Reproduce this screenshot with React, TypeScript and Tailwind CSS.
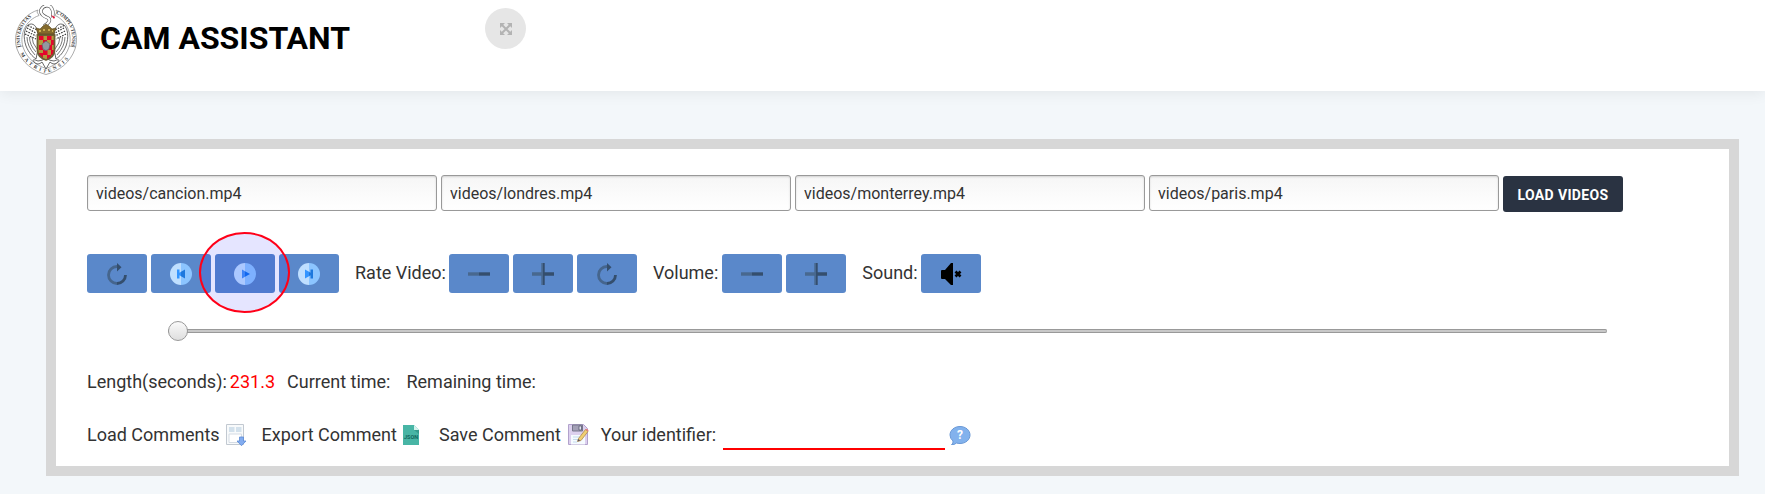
import { useState, type ReactNode } from "react";

const videos = ["videos/cancion.mp4", "videos/londres.mp4", "videos/monterrey.mp4", "videos/paris.mp4"];

function Crest() {
  return (
    <svg viewBox="0 0 62 70" className="h-[70px] w-[62px] shrink-0" role="img" aria-label="Universidad Complutense">
      <defs>
        <path id="ringLeft" d="M6 42 C2 28 9 14 22 9.500" />
        <path id="ringRight" d="M41 8.500 C54 14 60 28 56 42" />
        <path id="ringBottom" d="M3.500 45 C9 58 19 64.500 31 68 C43 64.500 53 58 58.500 45" />
        <clipPath id="shield">
          <path d="M22.500 30h17v15q0 7-8.500 10q-8.500-3-8.500-10z" />
        </clipPath>
      </defs>
      <g fill="none" stroke="#888" strokeWidth=".7">
        <path d="M23 5 C5 11-3 29 2 44 C7 58 18 66 31 69.500 C44 66 55 58 60 44 C65 29 57 11 41 5" />
        <path d="M24 10.500 C11 15 4 29 8 42 C12 54 21 60 31 63.500 C41 60 50 54 54 42 C58 29 51 15 40 10.500" />
        <path d="M23 5l-1 2 2 3.500M41 5l1 2-2 3.500M1 42l7-1M61 42l-7-1" />
      </g>
      <g fontFamily="Liberation Serif, serif" fontSize="5" fontWeight="700" fill="#333">
        <text><textPath href="#ringLeft">UNIVERSITAS</textPath></text>
        <text><textPath href="#ringRight">COMPLVTENSIS</textPath></text>
        <text><textPath href="#ringBottom" startOffset="4">{"M\u00a0\u00a0A\u00a0\u00a0T\u00a0\u00a0R\u00a0\u00a0I\u00a0\u00a0T\u00a0\u00a0E\u00a0\u00a0N\u00a0\u00a0S\u00a0\u00a0I\u00a0\u00a0S"}</textPath></text>
      </g>
      <path d="M29 21C34 18 36 15 33 13C28 11 25 9 26 5C28 0 35-1 37 4C39 8 37 10 38 12" fill="none" stroke="#555" strokeWidth="3.400" />
      <path d="M29 21C34 18 36 15 33 13C28 11 25 9 26 5C28 0 35-1 37 4C39 8 37 10 38 12" fill="none" stroke="#fff" strokeWidth="2.200" />
      <path d="M36 10l3 4 1-2z" fill="#e3062c" />
      <g fill="#fff" stroke="#444" strokeWidth=".8">
        <path d="M23 29C22 21 18 17 13 20C9 24 8 32 11 41C14 48 17 51 21 54L23 44Z" />
        <path d="M39 29C40 21 44 17 49 20C53 24 54 32 51 41C48 48 45 51 41 54L39 44Z" />
        <path d="M23 56q-7-3-4 1q4 4 8 0l4 7 4-7q4 4 8 0q3-4-4-1q-4 0-8-3q-4 3-8 3z" />
      </g>
      <g fill="none" stroke="#333" strokeWidth="1.200" strokeDasharray="1.500 1.200">
        <path d="M12 23l9 5M11 26l10 5M10 29l11 5M49 23l-9 5M50 26l-10 5M51 29l-10 5" />
        <path d="M13 20.500l8 4M49 20.500l-8 4" />
      </g>
      <path d="M12 32q0 9 8 18M14.500 32q0 8 6.500 15M17 32q0 6 5 12M50 32q0 9-8 18M47.500 32q0 8-6.500 15M45 32q0 6-5 12" fill="none" stroke="#555" strokeWidth=".8" />
      <g clipPath="url(#shield)">
        <path d="M22 29h18v27H22z" fill="#b39a3e" />
        <path d="M24 30h4.500v5H24zM32 30h4.500v5H32zM28 35h4v5h-4zM36 35h4v5h-4zM24 40h4v5h-4zM33 40h4v5h-4zM28 45h4.500v5H28zM36 45h4v5h-4zM24 48h4v5h-4zM32 50h4v5h-4z" fill="#e3062c" />
      </g>
      <path d="M22.500 30h17v15q0 7-8.500 10q-8.500-3-8.500-10z" fill="none" stroke="#6d5d33" strokeWidth="1.800" />
      <path d="M31 36l4 3-1 5q-3 3-6 0l-1-5z" fill="#9298a0" stroke="#5e636b" strokeWidth=".7" />
      <path d="M23 29l-2-6 4 1 3-3 3-2 3 2 3 3 4-1-2 6z" fill="#83692c" stroke="#544420" strokeWidth=".6" />
      <path d="M24 26h2m2-1h2m3 0h2m2 1h1" stroke="#e0c25c" strokeWidth="1.300" />
    </svg>
  );
}

function ReloadIcon() {
  return (
    <svg viewBox="0 0 22 22" className="h-[22px] w-[22px]" aria-hidden="true">
      <path d="M11 3.500A8.500 8.500 0 1 0 11 20.500" fill="none" stroke="#45658d" strokeWidth="2.800" />
      <path d="M11 20.500A8.500 8.500 0 0 0 19.500 12" fill="none" stroke="#344e6d" strokeWidth="2.800" />
      <path d="M11 0l4.500 4.200L11 8.500z" fill="#344e6d" />
    </svg>
  );
}

function MinusIcon() {
  return (
    <svg viewBox="0 0 22 22" className="h-[22px] w-[22px]" aria-hidden="true">
      <path d="M0 9.300h11v3.400H0z" fill="#48688f" />
      <path d="M11 9.300h11v3.400H11z" fill="#344e6d" />
    </svg>
  );
}

function PlusIcon() {
  return (
    <svg viewBox="0 0 22 22" className="h-[22px] w-[22px]" aria-hidden="true">
      <path d="M0 9.300h9.300V0H11v22H9.300v-9.300H0z" fill="#48688f" />
      <path d="M11 0h1.700v9.300H22v3.400h-9.300V22H11z" fill="#344e6d" />
    </svg>
  );
}

function DiscIcon({ kind }: { kind: "previous" | "play" | "next" }) {
  return (
    <svg viewBox="0 0 22 22" className="h-[22px] w-[22px]" aria-hidden="true">
      <path d="M11 0a11 11 0 0 0 0 22z" fill="#bfdfff" />
      <path d="M11 0a11 11 0 0 1 0 22z" fill="#8cc5ff" />
      {kind === "play" && (
        <>
          <path d="M8 6.500l3 1.700v5.600l-3 1.700z" fill="#4492f6" />
          <path d="M11 8.200l5 2.800-5 2.800z" fill="#1473ec" />
        </>
      )}
      {kind === "previous" && (
        <>
          <path d="M7 6.500h2.500v3.300L11 8.800v4.400l-1.500-1V15.500H7z" fill="#3395ff" />
          <path d="M11 8.800l4-2.300v9l-4-2.300z" fill="#1d78dd" />
        </>
      )}
      {kind === "next" && (
        <>
          <path d="M7 6.500l4 2.300v4.400l-4 2.300z" fill="#3395ff" />
          <path d="M11 8.800l1.500 1V6.500H15v9h-2.500v-3.300l-1.500 1z" fill="#1d78dd" />
        </>
      )}
    </svg>
  );
}

function MutedIcon() {
  return (
    <svg viewBox="0 0 22 22" className="h-[22px] w-[22px]" aria-hidden="true">
      <path d="M1 8q0-1 1-1h3l6-7h2v22h-2l-6-6H2q-1 0-1-1z" />
      <path d="M15.500 8.500l5 5m0-5l-5 5" stroke="#000" strokeWidth="2.600" />
    </svg>
  );
}

function ControlButton({ label, children }: { label: string; children: ReactNode }) {
  return (
    <button type="button" aria-label={label} className="flex h-[39px] w-[60px] items-center justify-center rounded-[3px] bg-[#5a88ca] pt-px">
      {children}
    </button>
  );
}

function DownloadPageIcon() {
  return (
    <svg viewBox="0 0 22 22" className="h-[22px] w-[22px]" aria-hidden="true">
      <path d="M1.500.5h17v20h-17z" fill="#f8fafb" stroke="#c2c9d1" />
      <path d="M4 3h5.500v5H4zM11 3h5.500v5H11z" fill="#d3e1ec" />
      <path d="M4 10h12.500v8.500H4z" fill="#fff" stroke="#d5dce4" />
      <path d="M14.500 13h4v4h2.500l-4.500 4.700L12 17h2.500z" fill="#82acf0" stroke="#5c8bd6" strokeWidth=".8" />
    </svg>
  );
}

function JsonIcon() {
  return (
    <svg viewBox="0 0 16 20" className="h-5 w-4" aria-hidden="true">
      <path d="M0 0h11l5 5v15H0z" fill="#48b5a5" />
      <path d="M11 0l5 5h-5z" fill="#d5f2ed" />
      <path d="M11 5h5v4z" fill="#359b8d" />
      <text x="8" y="14" textAnchor="middle" fontFamily="Roboto, sans-serif" fontSize="5.500" fontWeight="700" fill="#12675c">JSON</text>
    </svg>
  );
}

function SaveIcon() {
  return (
    <svg viewBox="0 0 22 22" className="h-[22px] w-[22px]" aria-hidden="true">
      <path d="M1.500.500h15l4 4v16h-19z" fill="#dcd0ee" stroke="#b2a2cc" />
      <path d="M5.500 1h10v6h-10z" fill="#a3a0b6" stroke="#77768c" />
      <path d="M12 2h2.500v4H12z" fill="#e3e5ee" stroke="#5a5c72" strokeWidth=".8" />
      <path d="M4 11h14v9.500H4z" fill="#f6fbff" />
      <path d="M6 13h7M6 15.500h5M6 18h4" stroke="#c5dced" />
      <path d="M11.500 14.500l7-9 2.500 2-7 9-3.500 1z" fill="#f0cf72" stroke="#ad8951" strokeWidth=".8" />
      <path d="M18.500 5.500l.8-.8q1.500 0 2.300 1.800L21 7.500z" fill="#e77b80" />
      <path d="M10.500 17.500l.8-2.500 2 1.600z" fill="#595363" />
    </svg>
  );
}

function HelpIcon() {
  return (
    <svg viewBox="0 0 22 20" className="h-5 w-[22px]" aria-hidden="true">
      <path d="M11 .5c5.600 0 10 3.700 10 8.500s-4.400 8.500-10 8.500q-2 0-3.500-.5-2 2-5 1.500 2-1 1.500-3.500Q1 12.500 1 9C1 4.200 5.400.5 11 .5z" fill="#82b2ed" stroke="#6a99d6" />
      <text x="11" y="13" textAnchor="middle" fontFamily="Roboto, sans-serif" fontSize="12" fontWeight="700" fill="#fff">?</text>
    </svg>
  );
}

export default function App() {
  const [paths, setPaths] = useState(videos);
  const [position, setPosition] = useState(0);
  const [identifier, setIdentifier] = useState("");

  return (
    <div className="min-h-screen bg-[#f3f7fa] font-[Roboto,sans-serif] text-lg text-[#333]">
      <header className="flex items-start bg-white pt-[5px] pb-4 pl-[15px] shadow-[0_2px_14px_rgba(0,0,0,0.07)]">
        <Crest />
        <h1 className="ml-[23px] pt-[15px] text-[32px] leading-9 font-bold text-black">CAM ASSISTANT</h1>
        <button type="button" aria-label="Full screen" className="mt-[3px] ml-[135px] flex h-[41px] w-[41px] items-center justify-center rounded-full bg-[#e6e6e6]">
          <svg viewBox="0 0 12 12" className="h-3 w-3" aria-hidden="true">
            <path d="M2 2l8 8m0-8l-8 8" stroke="#b3b3b3" strokeWidth="2" />
            <path d="M0 0h5L0 5zM7 0h5v5zM0 7v5h5zM12 7v5H7z" fill="#b3b3b3" />
          </svg>
        </button>
      </header>

      <main className="pt-12 pr-[26px] pb-[18px] pl-[46px]">
        <section className="border-[10px] border-[#d7d7d7] bg-white pt-[26px] pr-[106px] pb-4 pl-[31px]">
          <form className="flex items-start gap-1" onSubmit={(e) => e.preventDefault()}>
            {paths.map((path, i) => (
              <input
                key={i}
                type="text"
                aria-label={`Video ${i + 1}`}
                value={path}
                onChange={(e) => setPaths(paths.map((p, j) => (j === i ? e.target.value : p)))}
                className="h-9 min-w-0 flex-1 rounded-[3px] border border-[#999] bg-linear-to-b from-[#f6f6f6] to-white px-2 text-base shadow-[inset_0_1px_2px_rgba(0,0,0,0.15)]"
              />
            ))}
            <button type="submit" className="mt-px h-9 w-[120px] rounded-[3px] bg-[#2a3342] pt-0.5 text-sm font-bold tracking-wide text-white">
              LOAD VIDEOS
            </button>
          </form>

          <div className="mt-[42px] flex items-center gap-4">
            <div className="flex gap-1">
              <ControlButton label="Restart"><ReloadIcon /></ControlButton>
              <ControlButton label="Previous"><DiscIcon kind="previous" /></ControlButton>
              <div className="relative z-10">
                <ControlButton label="Play"><DiscIcon kind="play" /></ControlButton>
                <span className="pointer-events-none absolute -top-[22px] -left-4 h-[81px] w-[91px] rounded-[50%] border-2 border-[#ff0018] bg-[#0000ff]/10" />
              </div>
              <ControlButton label="Next"><DiscIcon kind="next" /></ControlButton>
            </div>
            <div className="flex items-center gap-1">
              <span className="-mr-px pb-0.5">Rate Video:</span>
              <ControlButton label="Slower"><MinusIcon /></ControlButton>
              <ControlButton label="Faster"><PlusIcon /></ControlButton>
              <ControlButton label="Reset rate"><ReloadIcon /></ControlButton>
            </div>
            <div className="flex items-center gap-1">
              <span className="pb-0.5">Volume:</span>
              <ControlButton label="Volume down"><MinusIcon /></ControlButton>
              <ControlButton label="Volume up"><PlusIcon /></ControlButton>
            </div>
            <div className="flex items-center gap-1">
              <span className="-mr-px pb-0.5">Sound:</span>
              <ControlButton label="Mute"><MutedIcon /></ControlButton>
            </div>
          </div>

          <div className="mt-7 mr-4 ml-[81px] flex">
            <input
              type="range"
              aria-label="Position"
              min={0}
              max={231.3}
              step={0.1}
              value={position}
              onChange={(e) => setPosition(Number(e.target.value))}
              className="h-5 w-full appearance-none bg-transparent [&::-webkit-slider-runnable-track]:h-1 [&::-webkit-slider-runnable-track]:rounded-sm [&::-webkit-slider-runnable-track]:bg-[#c8c8c8] [&::-webkit-slider-runnable-track]:shadow-[inset_0_1px_0_#999,inset_0_-1px_0_#999] [&::-webkit-slider-thumb]:-mt-2 [&::-webkit-slider-thumb]:h-5 [&::-webkit-slider-thumb]:w-5 [&::-webkit-slider-thumb]:appearance-none [&::-webkit-slider-thumb]:rounded-full [&::-webkit-slider-thumb]:border [&::-webkit-slider-thumb]:border-[#999] [&::-webkit-slider-thumb]:bg-linear-to-b [&::-webkit-slider-thumb]:from-[#fafafa] [&::-webkit-slider-thumb]:to-[#dedede]"
            />
          </div>

          <div className="mt-[27px] flex leading-7">
            <span>Length(seconds):</span>
            <span className="ml-[3px] text-[#ff0000]">231.3</span>
            <span className="ml-3">Current time:</span>
            <span className="ml-4">Remaining time:</span>
          </div>

          <div className="mt-[23px] flex items-center gap-3 leading-7">
            <button type="button" className="flex items-center gap-[5px] pr-[3px]">Load Comments<DownloadPageIcon /></button>
            <button type="button" className="flex items-center gap-[6px] pr-2">Export Comment<JsonIcon /></button>
            <button type="button" className="flex items-center gap-[6px]">Save Comment<SaveIcon /></button>
            <div className="flex items-center">
              <label htmlFor="identifier" className="mr-[7px]">Your identifier:</label>
              <input
                id="identifier"
                type="text"
                value={identifier}
                onChange={(e) => setIdentifier(e.target.value)}
                className="h-[31px] w-[222px] border-b-2 border-[#ff0000] bg-transparent px-1 outline-none"
              />
              <button type="button" aria-label="Help" className="ml-1 pt-0.5"><HelpIcon /></button>
            </div>
          </div>
        </section>
      </main>
    </div>
  );
}
